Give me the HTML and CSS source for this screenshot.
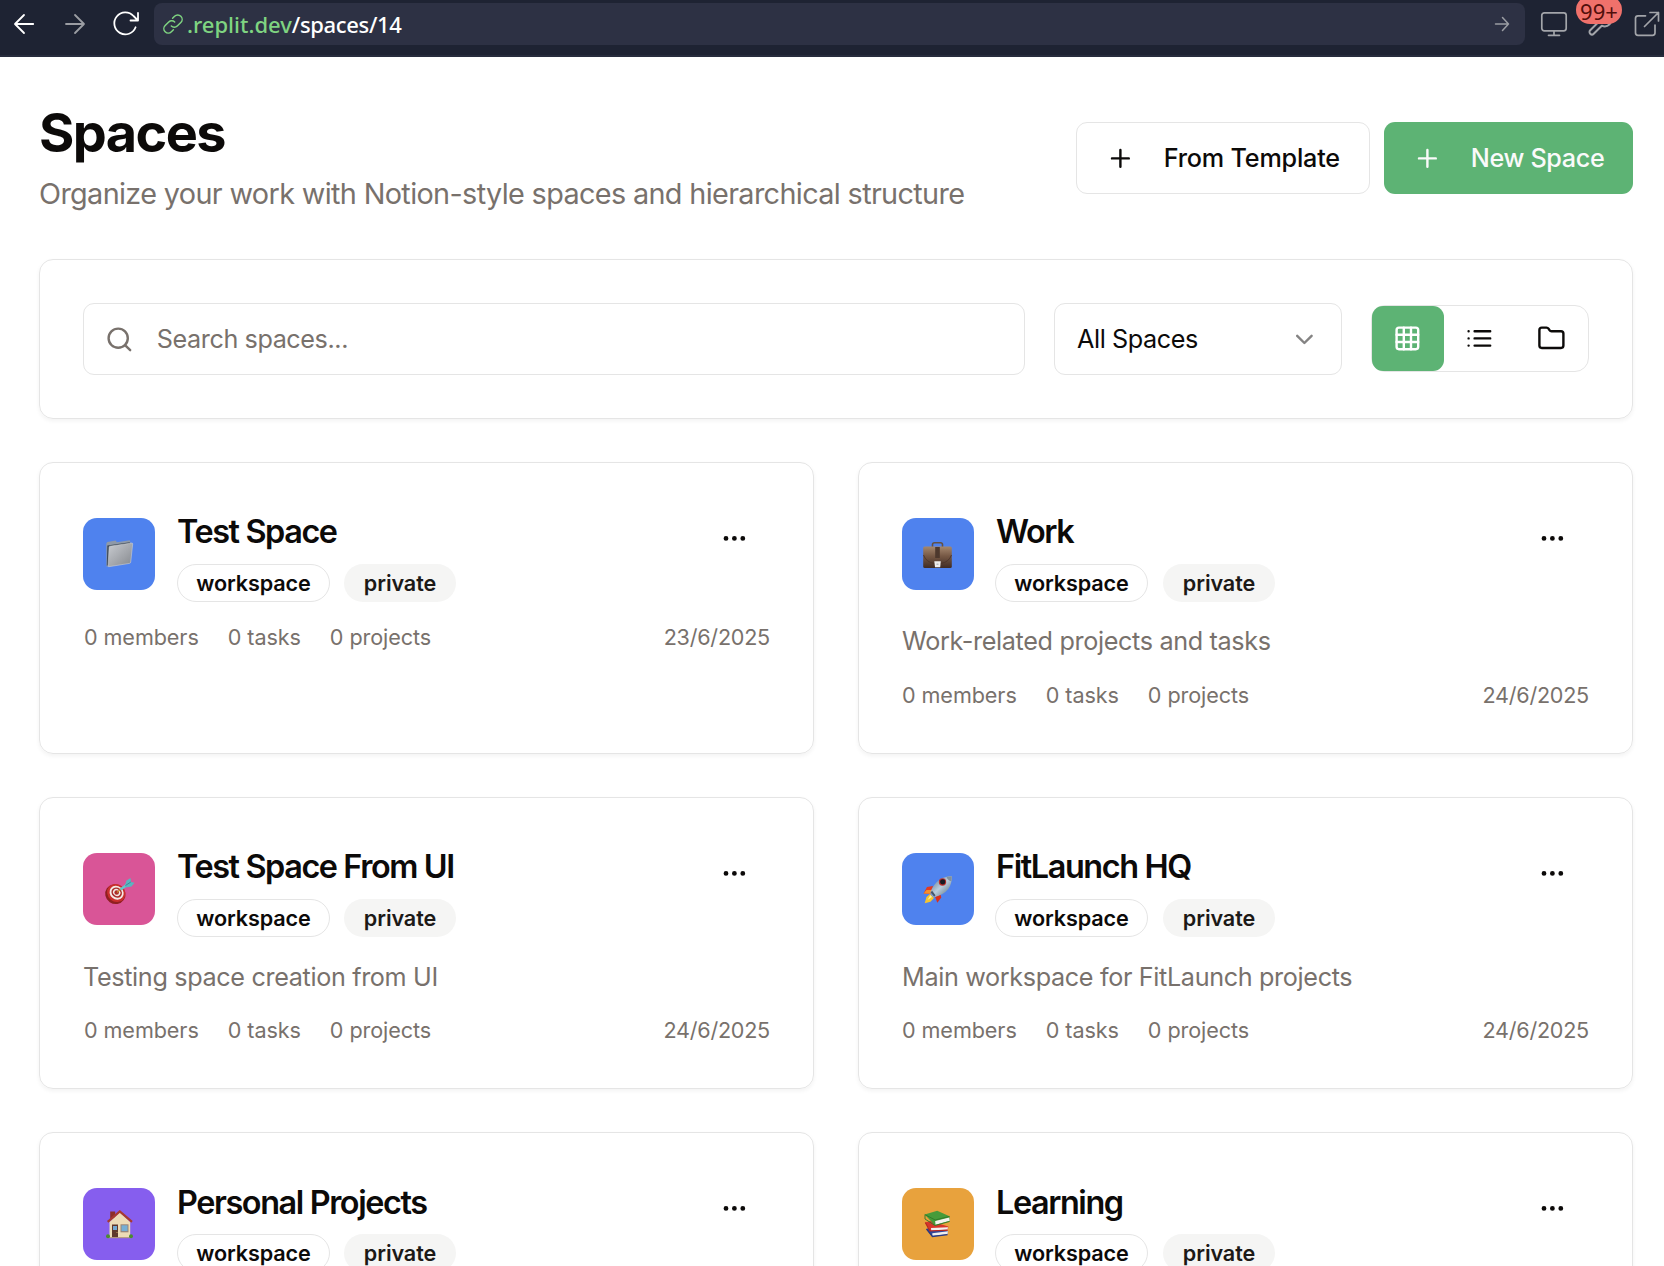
FILE: index.html
```html
<!DOCTYPE html>
<html lang="en">
<head>
<meta charset="utf-8">
<title>Spaces</title>
<link rel="stylesheet" href="styles.css">
</head>
<body>
<header class="browser">
  <div class="nav">
    <svg class="nav-icon back" width="26" height="26" viewBox="0 0 26 26"><path d="M21.200 13H3.400M12 4L3 13l9 9"/></svg>
    <svg class="nav-icon forward" width="26" height="26" viewBox="0 0 26 26"><path d="M4 13H22M13 4l9 9-9 9"/></svg>
    <svg class="nav-icon reload" width="28" height="28" viewBox="0 0 28 28"><path d="M23.600 17.300A11 11 0 1 1 21.500 6l4.500 4.500M26 3v7.500h-7.500"/></svg>
  </div>
  <div class="address">
    <svg class="link" width="20" height="20" viewBox="0 0 24 24"><path d="M10 14.500a5 5 0 0 0 7.100 0l4.300-4.300a5 5 0 0 0-7.500-7.500L11.500 5M14 9.500a5 5 0 0 0-7.100 0L2.600 13.800a5 5 0 0 0 7.500 7.500l2.400-2.300"/></svg>
    <span class="url"><span class="host">.replit.dev</span><span class="path">/spaces/14</span></span>
    <svg class="go" width="16" height="16" viewBox="0 0 16 16"><path d="M1.500 8h13M8.500 1.500L14.500 8l-6 6.500"/></svg>
  </div>
  <div class="tools">
    <svg width="28" height="28" viewBox="0 0 28 28"><rect x="1.800" y="2.800" width="24.400" height="18" rx="2.500"/><path d="M14 21v4.300M8.500 25.300h11"/></svg>
    <span class="devtools">
      <svg width="28" height="28" viewBox="0 0 24 24"><path d="M14.700 6.300a1 1 0 0 0 0 1.400l1.600 1.600a1 1 0 0 0 1.400 0l3.770-3.770a6 6 0 0 1-7.940 7.940l-6.910 6.910a2.120 2.120 0 0 1-3-3l6.910-6.910a6 6 0 0 1 7.940-7.940l-3.760 3.760z"/></svg>
      <span class="count">99+</span>
    </span>
    <svg width="28" height="28" viewBox="0 0 28 28"><path d="M13.500 5.800H6a2.500 2.500 0 0 0-2.500 2.500v14.500A2.500 2.500 0 0 0 6 25.300h14.500a2.500 2.500 0 0 0 2.500-2.500V15M18 2.500h8.500v8.500M26.500 2.500L12.500 16.500"/></svg>
  </div>
</header>

<main class="page">
  <section class="heading">
    <div>
      <h1>Spaces</h1>
      <p class="subtitle">Organize your work with Notion-style spaces and hierarchical structure</p>
    </div>
    <div class="actions">
      <button class="btn outline"><svg class="icon" viewBox="0 0 24 24"><path d="M5 12h14M12 5v14"/></svg><span>From Template</span></button>
      <button class="btn primary"><svg class="icon" viewBox="0 0 24 24"><path d="M5 12h14M12 5v14"/></svg><span>New Space</span></button>
    </div>
  </section>

  <section class="filters">
    <div class="search"><svg class="icon" viewBox="0 0 24 24"><circle cx="11" cy="11" r="8"/><path d="m21 21-4.300-4.300"/></svg><span>Search spaces...</span></div>
    <div class="select"><span>All Spaces</span><svg class="icon" viewBox="0 0 24 24"><path d="m6 9 6 6 6-6"/></svg></div>
    <div class="views">
      <button class="view active"><svg class="icon" viewBox="0 0 24 24"><rect x="3" y="3" width="18" height="18" rx="2"/><path d="M3 9h18M3 15h18M9 3v18M15 3v18"/></svg></button>
      <button class="view"><svg class="icon" viewBox="0 0 24 24"><path d="M8 6h13M8 12h13M8 18h13M3 6h.01M3 12h.01M3 18h.01"/></svg></button>
      <button class="view"><svg class="icon" viewBox="0 0 24 24"><path d="M20 20a2 2 0 0 0 2-2V8a2 2 0 0 0-2-2h-7.900a2 2 0 0 1-1.690-.9L9.600 3.900A2 2 0 0 0 7.930 3H4a2 2 0 0 0-2 2v13a2 2 0 0 0 2 2Z"/></svg></button>
    </div>
  </section>

  <section class="grid">
    <article class="card">
      <div class="card-head">
        <div class="tile blue">
          <svg viewBox="0 0 72 72">
            <defs><linearGradient id="folder" x1="0" y1="0" x2="1" y2="1"><stop offset="0" stop-color="#c9ccd1"/><stop offset="1" stop-color="#85888d"/></linearGradient></defs>
            <path d="M23.300 25.500l1-1.500 8.500-1.500 1 1.700 13-2 .7 2.800-20 23-4 .5z" fill="#8e99a8"/>
            <path d="M24.300 27.500l22.500-3.300.4 2-20 3-1.500 18-1.900.6z" fill="#3f4b58"/>
            <path d="M26.800 28.200l22-3.200q1 0 .9 1l-2 18.200q-.2 1-1.200 1.200l-20.700 3.300q-.8 0-.7-.8l1-18.700q.1-.8.700-1z" fill="url(#folder)" stroke="#d7d9dc" stroke-width=".5"/>
          </svg>
        </div>
        <div class="card-title"><h2>Test Space</h2><div class="badges"><span class="badge line">workspace</span><span class="badge soft">private</span></div></div>
        <button class="more"><svg class="icon" viewBox="0 0 24 24"><circle cx="12" cy="12" r="1"/><circle cx="19" cy="12" r="1"/><circle cx="5" cy="12" r="1"/></svg></button>
      </div>
      <div class="meta"><span>0 members</span><span>0 tasks</span><span>0 projects</span><time>23/6/2025</time></div>
    </article>

    <article class="card">
      <div class="card-head">
        <div class="tile blue">
          <svg viewBox="0 0 72 72">
            <defs><linearGradient id="leather" x1="0" y1="0" x2="0" y2="1"><stop offset="0" stop-color="#a5886f"/><stop offset=".45" stop-color="#765844"/><stop offset="1" stop-color="#3f2b24"/></linearGradient></defs>
            <path d="M30.500 29v-2.500q0-1.800 2-1.800h6q2 0 2 1.800V29" fill="none" stroke="#625146" stroke-width="1.600"/>
            <rect x="21.200" y="28.500" width="28.600" height="21.500" rx="1.500" fill="url(#leather)"/>
            <path d="M21.500 37q2.500 7 10.500 8.500h7q8-1.500 10.500-8.500" fill="none" stroke="#4b3329" stroke-width=".9"/>
            <rect x="33.200" y="29" width="4.600" height="11" fill="#4d382d"/>
            <path d="M32.300 43.300h6.500l-.6 6h-5.200z" fill="#efeeed"/><path d="M34.500 45.500h2v1.500h-2z" fill="#bbb"/>
          </svg>
        </div>
        <div class="card-title"><h2>Work</h2><div class="badges"><span class="badge line">workspace</span><span class="badge soft">private</span></div></div>
        <button class="more"><svg class="icon" viewBox="0 0 24 24"><circle cx="12" cy="12" r="1"/><circle cx="19" cy="12" r="1"/><circle cx="5" cy="12" r="1"/></svg></button>
      </div>
      <p class="desc">Work-related projects and tasks</p>
      <div class="meta"><span>0 members</span><span>0 tasks</span><span>0 projects</span><time>24/6/2025</time></div>
    </article>

    <article class="card">
      <div class="card-head">
        <div class="tile pink">
          <svg viewBox="0 0 72 72">
            <ellipse cx="32.300" cy="41.200" rx="10.300" ry="9.700" transform="rotate(35 32.300 41.200)" fill="#8f1f20"/>
            <ellipse cx="33.300" cy="40" rx="9.600" ry="8.700" transform="rotate(40 33.300 40)" fill="#c92f2d"/>
            <ellipse cx="33.600" cy="39.700" rx="7.400" ry="6.600" transform="rotate(40 33.600 39.700)" fill="#f4e9e6"/>
            <ellipse cx="33.700" cy="39.600" rx="5.500" ry="4.900" transform="rotate(40 33.700 39.600)" fill="#a92b29"/>
            <ellipse cx="33.700" cy="39.500" rx="3.900" ry="3.400" transform="rotate(40 33.700 39.500)" fill="#f4e9e6"/>
            <circle cx="33.700" cy="39.500" r="2.300" fill="#a92b29"/>
            <path d="M34 39.500l4-3.600" stroke="#c98a2b" stroke-width="1.200"/>
            <path d="M37.500 36.500l6.500-4.700" stroke="#62c6cc" stroke-width="2.600"/>
            <path d="M42 32l1.500-4.500 4-2.500.5 4 3.500.7-3 3.800-6 1z" fill="#5bb5c0"/>
            <path d="M42.500 32.500l5.300-3.500" stroke="#2f7f91" stroke-width=".8"/>
          </svg>
        </div>
        <div class="card-title"><h2>Test Space From UI</h2><div class="badges"><span class="badge line">workspace</span><span class="badge soft">private</span></div></div>
        <button class="more"><svg class="icon" viewBox="0 0 24 24"><circle cx="12" cy="12" r="1"/><circle cx="19" cy="12" r="1"/><circle cx="5" cy="12" r="1"/></svg></button>
      </div>
      <p class="desc">Testing space creation from UI</p>
      <div class="meta"><span>0 members</span><span>0 tasks</span><span>0 projects</span><time>24/6/2025</time></div>
    </article>

    <article class="card">
      <div class="card-head">
        <div class="tile blue">
          <svg viewBox="0 0 72 72">
            <defs><linearGradient id="hull" x1="0" y1="0" x2="1" y2="1"><stop offset="0" stop-color="#4f6c88"/><stop offset=".5" stop-color="#bacddc"/><stop offset="1" stop-color="#4c6574"/></linearGradient></defs>
            <path d="M31 33l-6 1-3.500 6.500 7 .3z" fill="#e23b20"/><path d="M21.500 40.500l3-3.500 5 0-1 3.700z" fill="#f7902b"/>
            <path d="M38.500 41.500l.8 3-4 5.300-2.200-6z" fill="#dc2f1b"/>
            <path d="M28 41l-3.500 3-1.800 6.300 5.800-1.600 3.500-3.700z" fill="#f6c52f"/><path d="M28.500 42l-3 5 4.500-3z" fill="#fff3a0"/>
            <path d="M49.800 23.200q-7.500.2-12.300 3.600-6 4.200-9.300 13l3.800 4.500q10-2.700 14.300-8.300 3.600-4.800 3.500-12.800z" fill="url(#hull)"/>
            <path d="M28.500 39.500l3.700 4.300 1.300-1.500-3.400-4.600z" fill="#46586d"/>
            <circle cx="40.500" cy="29" r="3.700" fill="#bc2f2b"/><circle cx="40.700" cy="28.800" r="2.600" fill="#171a22"/>
            <path d="M44.500 23.800q1 3.700 5 4.500l.3-5.100z" fill="#82909c"/>
          </svg>
        </div>
        <div class="card-title"><h2>FitLaunch HQ</h2><div class="badges"><span class="badge line">workspace</span><span class="badge soft">private</span></div></div>
        <button class="more"><svg class="icon" viewBox="0 0 24 24"><circle cx="12" cy="12" r="1"/><circle cx="19" cy="12" r="1"/><circle cx="5" cy="12" r="1"/></svg></button>
      </div>
      <p class="desc">Main workspace for FitLaunch projects</p>
      <div class="meta"><span>0 members</span><span>0 tasks</span><span>0 projects</span><time>24/6/2025</time></div>
    </article>

    <article class="card">
      <div class="card-head">
        <div class="tile violet">
          <svg viewBox="0 0 72 72">
            <path d="M27.200 23.500h5v7h-5z" fill="#8c2f28"/>
            <path d="M36.800 24.500L47.200 34v15.500H26.500V34z" fill="#eddcb6"/>
            <path d="M24.700 33.800L36.800 23.500l12.200 10.300" fill="none" stroke="#a83a30" stroke-width="2.200"/>
            <rect x="29" y="36.500" width="6" height="13" fill="#5e382b"/><rect x="30" y="38" width="4" height="4" fill="#72a9d2"/>
            <circle cx="34" cy="44.500" r=".5" fill="#e6bd62"/>
            <rect x="37.500" y="36.300" width="8" height="8" fill="#998475"/><rect x="38.500" y="37.300" width="6" height="5.800" fill="#75afd5"/>
            <path d="M25 49.700h23" stroke="#b79c76"/>
            <circle cx="25" cy="48.300" r="2" fill="#4b8b31"/><circle cx="48" cy="48.300" r="2" fill="#4b8b31"/>
          </svg>
        </div>
        <div class="card-title"><h2>Personal Projects</h2><div class="badges"><span class="badge line">workspace</span><span class="badge soft">private</span></div></div>
        <button class="more"><svg class="icon" viewBox="0 0 24 24"><circle cx="12" cy="12" r="1"/><circle cx="19" cy="12" r="1"/><circle cx="5" cy="12" r="1"/></svg></button>
      </div>
    </article>

    <article class="card">
      <div class="card-head">
        <div class="tile amber">
          <svg viewBox="0 0 72 72">
            <path d="M24.500 41l5-2 16.500 3.800-.5 3.700-15.500 2z" fill="#31479a"/><path d="M30.300 45.300l15.700-2-.5 3-15.200 1.700z" fill="#eee"/><path d="M24.500 41l6 7.500 15-1.900" fill="none" stroke="#283a83" stroke-width="1.300"/>
            <path d="M23.300 34.500l5-1.500 18 5.500-.5 4-17.500.5z" fill="#d7352b"/><path d="M29 40l17-.8-.5 2.600-16.300.8z" fill="#f2f0ef"/><path d="M23.300 34.500l4.500 8.500 17.500-.8" fill="none" stroke="#b52722" stroke-width="1.200"/>
            <path d="M22.700 26.500l12.500-3.700 12.300 5.500.3 5-14.800 4.200z" fill="#469b3a"/><path d="M33.200 33l14-3.600.5 3.300-14.200 4z" fill="#f3f3ef"/><path d="M22.700 26.500l10.500 5.500 14.300-3.600M23 27v4l10 6.500 14.500-4" fill="none" stroke="#2e7828" stroke-width=".9"/>
          </svg>
        </div>
        <div class="card-title"><h2>Learning</h2><div class="badges"><span class="badge line">workspace</span><span class="badge soft">private</span></div></div>
        <button class="more"><svg class="icon" viewBox="0 0 24 24"><circle cx="12" cy="12" r="1"/><circle cx="19" cy="12" r="1"/><circle cx="5" cy="12" r="1"/></svg></button>
      </div>
    </article>
  </section>
</main>
</body>
</html>
```
FILE: styles.css
```css
* { box-sizing: border-box; }

body {
  margin: 0;
  height: 1266px;
  overflow: hidden;
  background: #fff;
  color: #0c0a09;
  font-family: Inter, "Liberation Sans", sans-serif;
}

h1, h2, p { margin: 0; }

button {
  margin: 0;
  padding: 0;
  border: 0;
  background: none;
  color: inherit;
  font: inherit;
}

svg {
  display: block;
  flex: none;
}

.icon {
  width: 28.8px;
  height: 28.8px;
  fill: none;
  stroke: currentColor;
  stroke-width: 2;
  stroke-linecap: round;
  stroke-linejoin: round;
}

/* Browser bar */
.browser {
  display: flex;
  align-items: flex-start;
  height: 57px;
  padding: 3px 0 0;
  background: #1e2333;
  border-bottom: 2px solid #272c3d;
}

.nav {
  display: flex;
  align-items: center;
  width: 154px;
  height: 42px;
  padding-left: 12px;
}

.nav-icon {
  fill: none;
  stroke: #fff;
  stroke-width: 1.8;
  stroke-linecap: round;
  stroke-linejoin: round;
}

.forward { margin-left: 24px; stroke: #9b9da3; }
.reload { margin-left: 24px; }

.address {
  display: flex;
  align-items: center;
  width: 1371px;
  height: 42px;
  padding: 0 15px 0 9px;
  border-radius: 8px;
  background: #2d3144;
}

.link {
  fill: none;
  stroke: #7fd481;
  stroke-width: 1.8;
  stroke-linecap: round;
}

.url {
  margin-left: 4px;
  font-family: "Noto Sans", sans-serif;
  font-size: 22px;
  line-height: 40px;
  font-weight: 500;
  color: #fff;
}

.host { color: #7fd481; }
.path { letter-spacing: -.35px; }

.go {
  margin-left: auto;
  fill: none;
  stroke: #9b9da3;
  stroke-width: 1.5;
  stroke-linecap: round;
  stroke-linejoin: round;
}

.tools {
  display: flex;
  align-items: center;
  height: 42px;
  padding-left: 15px;
  gap: 18px;
}

.tools svg {
  fill: none;
  stroke: #a3a5aa;
  stroke-width: 1.7;
  stroke-linecap: round;
  stroke-linejoin: round;
}

.devtools {
  position: relative;
}

.count {
  position: absolute;
  top: -14px;
  left: -10px;
  width: 46px;
  height: 28px;
  border-radius: 14px;
  background: #f0716b;
  color: #520f0c;
  font-family: "Noto Sans", sans-serif;
  font-size: 22px;
  line-height: 30px;
  text-align: center;
}

/* Page heading */
.page { padding: 43px 31px 0 39px; }

.heading {
  display: flex;
  justify-content: space-between;
  height: 159px;
}

h1 {
  height: 65px;
  font-size: 54px;
  line-height: 66px;
  font-weight: 700;
  letter-spacing: -1.6px;
}

.subtitle {
  margin-top: 9px;
  font-size: 28.8px;
  line-height: 40px;
  letter-spacing: -.64px;
  color: #78716c;
}

.actions {
  display: flex;
  gap: 14px;
  padding-top: 22px;
}

.btn {
  display: flex;
  align-items: center;
  height: 72px;
  border-radius: 11px;
  font-size: 25.2px;
  font-weight: 500;
  letter-spacing: -.2px;
  white-space: nowrap;
}

.btn span { margin-left: 29px; }

.outline {
  width: 294px;
  padding-left: 29px;
  border: 1px solid #e5e5e5;
}

.primary {
  width: 249px;
  padding-left: 29px;
  letter-spacing: -.35px;
  background: #5db374;
  color: #fafafa;
}

/* Filters */
.filters {
  display: flex;
  align-items: center;
  gap: 29px;
  height: 160px;
  padding: 0 43px;
  border: 1px solid #e5e5e5;
  border-radius: 14px;
  box-shadow: 0 2px 4px rgba(0, 0, 0, .05);
}

.search, .select {
  display: flex;
  align-items: center;
  height: 72px;
  border: 1px solid #e5e5e5;
  border-radius: 11px;
  font-size: 25.2px;
  letter-spacing: -.42px;
}

.search {
  flex: 1;
  padding-left: 21px;
  color: #78716c;
}

.search span { margin-left: 23px; }

.select {
  justify-content: space-between;
  width: 288px;
  padding: 0 22px;
}

.select .icon { opacity: .5; }

.views {
  display: flex;
  width: 218px;
  height: 67px;
  margin-bottom: 2px;
  border: 1px solid #e5e5e5;
  border-radius: 14px;
}

.view {
  display: flex;
  align-items: center;
  justify-content: center;
  width: 72px;
  height: 65px;
  padding-right: 2px;
  border-radius: 11px;
}

.active {
  background: #5db374;
  color: #fff;
}

/* Cards */
.grid {
  display: grid;
  grid-template-columns: 1fr 1fr;
  grid-auto-rows: 292px;
  gap: 43px 44px;
  margin-top: 43px;
}

.card {
  padding: 43px;
  border: 1px solid #e5e5e5;
  border-radius: 14px;
  box-shadow: 0 2px 4px rgba(0, 0, 0, .05);
}

.card-head {
  display: flex;
  align-items: center;
  height: 96px;
  margin-bottom: 21px;
}

.tile {
  width: 72px;
  height: 72px;
  border-radius: 14px;
}

.blue { background: #4f82ee; }
.pink { background: #d95597; }
.violet { background: #865eee; }
.amber { background: #e8a23d; }

.card-title {
  height: 96px;
  margin-left: 22px;
}

h2 {
  height: 52px;
  font-size: 32.4px;
  line-height: 52px;
  font-weight: 600;
  letter-spacing: -1.4px;
}

.card:nth-child(n+5) h2 { line-height: 54px; }

.badges {
  display: flex;
  gap: 14px;
  margin-top: 6px;
}

.badge {
  display: flex;
  align-items: center;
  justify-content: center;
  height: 38px;
  border-radius: 19px;
  font-size: 21.6px;
  font-weight: 600;
  letter-spacing: -.1px;
}

.line {
  width: 153px;
  border: 1px solid #e5e5e5;
}

.soft {
  width: 112px;
  background: #f5f5f4;
  color: #1c1917;
}

.card:nth-child(even) .badges {
  gap: 15px;
  margin-left: -1px;
}

.more {
  display: flex;
  justify-content: center;
  align-self: flex-start;
  width: 74px;
  margin: 18px 0 0 auto;
}

.card:nth-child(odd) .more { width: 72px; }

.desc {
  height: 36px;
  margin-bottom: 22px;
  font-size: 25.2px;
  line-height: 37px;
  letter-spacing: -.35px;
  color: #78716c;
}

.card:nth-child(n+3) .desc { line-height: 38px; }

.meta {
  display: flex;
  gap: 29px;
  font-size: 21.6px;
  line-height: 29px;
  letter-spacing: -.08px;
  color: #78716c;
}

.card:nth-child(odd) .meta { padding-left: 1px; }

.meta time {
  margin-left: auto;
  letter-spacing: -.25px;
}
```
